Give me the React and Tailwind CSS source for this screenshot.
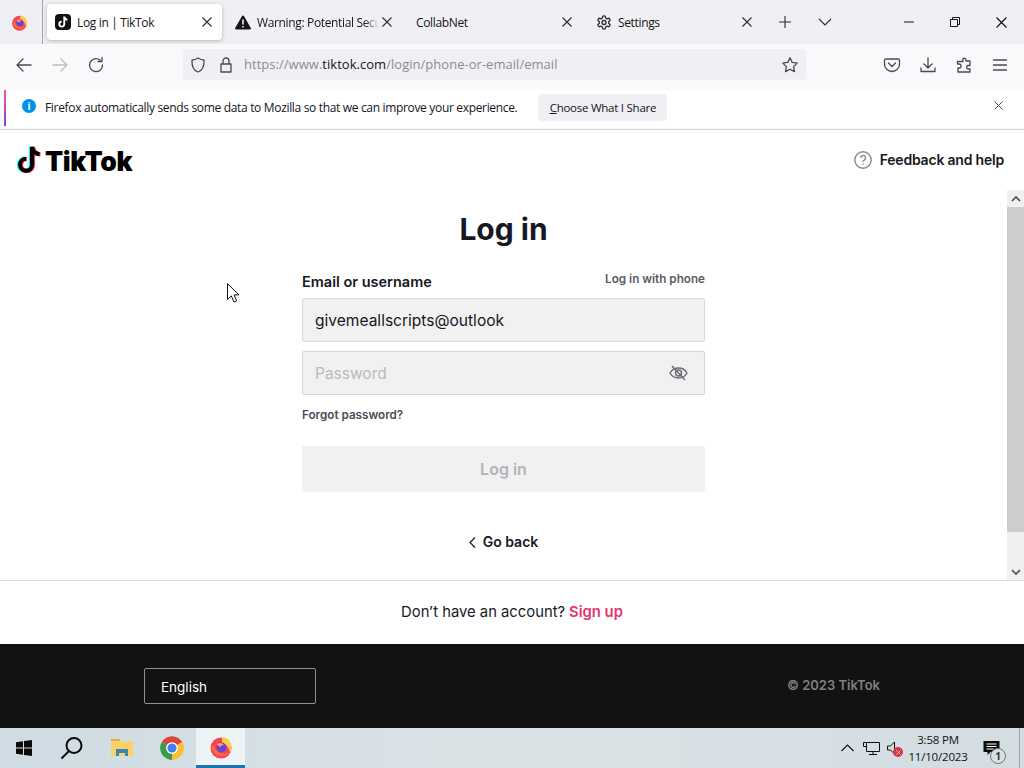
import React from "react";

const ui = "font-['Open_Sans',sans-serif]";
const web = "font-['Inter',sans-serif]";

const X = ({ s = 10, c = "#2b2a33" }) => (
  <svg width={s} height={s} viewBox="0 0 10 10" fill="none" stroke={c} strokeWidth="1.1"><path d="M.5.5l9 9M9.5.5l-9 9" /></svg>
);

const notePath = "M17 1v18a6 6 0 1 1-6-6M17 1c.4 4.200 3.400 7 7.500 7.500";

const Note = () => (
  <svg width="24" height="28" viewBox="2 0 24 28">
    <path d={notePath} fill="none" stroke="#25f4ee" strokeWidth="4.200" transform="translate(-1.100 .6)" />
    <path d={notePath} fill="none" stroke="#fe2c55" strokeWidth="4.200" transform="translate(1 1)" />
    <path d={notePath} fill="none" stroke="#000" strokeWidth="4" transform="translate(0 .8)" />
  </svg>
);

const Firefox = ({ s = 18 }) => (
  <svg width={s} height={s} viewBox="0 0 24 24">
    <circle cx="12" cy="13" r="10.500" fill="#f4435c" />
    <path d="M13 2c5.500.5 9.500 5 9.500 11 0 2-.6 3.500-1.500 5-1-6-4-9-8-10z" fill="#ffcb45" />
    <path d="M2 12c1 5 5 9 11 9 4 0 7-2 8.500-5-2 2-5 3-8 2.500C9 18 6 15 5 10z" fill="#ff6a39" />
    <circle cx="12.500" cy="12.500" r="5" fill="#6b3fd6" />
    <path d="M8 9c3-2 6-1 7 1-2-.4-3 .4-3 2-2-.5-3.500-1.500-4-3z" fill="#ffa436" />
  </svg>
);

const Chrome = () => (
  <svg width="26" height="26" viewBox="0 0 24 24">
    <path d="M12 12L2.500 6.500A11 11 0 0 1 21.500 6.500z" fill="#db4437" />
    <path d="M12 12l9.500-5.500A11 11 0 0 1 12 23z" fill="#fbc02d" />
    <path d="M12 12v11A11 11 0 0 1 2.500 6.500z" fill="#3a9b4a" />
    <circle cx="12" cy="12" r="5.400" fill="#fff" />
    <circle cx="12" cy="12" r="4.200" fill="#3f80ea" />
  </svg>
);

const Tab = ({ active, icon, title, fade, pad = "pl-2" }) => (
  <div className={`flex h-9 w-[175px] shrink-0 items-center pr-[10px] ${pad} ${active ? "rounded bg-white shadow-[0_1px_4px_rgba(0,0,0,0.25)]" : ""}`}>
    {icon && <span className="mr-[6px] flex w-4 shrink-0 justify-center">{icon}</span>}
    <span className={`min-w-0 flex-1 overflow-hidden whitespace-nowrap pt-px text-[12px] tracking-[-0.35px] text-[#15141a] ${fade ? "[mask-image:linear-gradient(to_right,black_88%,transparent_100%)]" : ""}`}>{title}</span>
    <span className="ml-[3px] shrink-0"><X /></span>
  </div>
);

const TabBar = () => (
  <div className={`flex h-11 shrink-0 items-center bg-[#f0f0f4] ${ui}`}>
    <div className="flex h-11 w-[43px] shrink-0 items-center justify-center border-r border-[#a5a5a8] pr-1"><Firefox s={17} /></div>
    <div className="ml-1 flex items-center gap-[5px]">
      <Tab active title="Log in | TikTok" icon={
        <span className="flex h-4 w-4 items-center justify-center rounded-[4px] bg-[#111]">
          <svg width="10" height="12" viewBox="2 0 24 28"><path d={notePath} fill="none" stroke="#fff" strokeWidth="4.500" /></svg>
        </span>} />
      <Tab fade title="Warning: Potential Security Risk Ahead" icon={
        <svg width="16" height="15" viewBox="0 0 16 15"><path d="M8 .5a1 1 0 0 1 .9.5l6.900 12a1 1 0 0 1-.9 1.500H1.100a1 1 0 0 1-.9-1.500L7.100 1A1 1 0 0 1 8 .5z" fill="#15141a" /><path d="M8 4.500v5M8 11v1.500" stroke="#fff" strokeWidth="1.500" /></svg>} />
      <Tab title="CollabNet" pad="pl-[9px]" />
      <Tab title="Settings" icon={
        <svg width="17" height="17" viewBox="0 0 24 24" fill="none" stroke="#2b2a33" strokeWidth="2"><path d="M12.220 2h-.44a2 2 0 0 0-2 2v.18a2 2 0 0 1-1 1.730l-.43.250a2 2 0 0 1-2 0l-.15-.08a2 2 0 0 0-2.730.730l-.22.380a2 2 0 0 0 .73 2.730l.15.100a2 2 0 0 1 1 1.720v.510a2 2 0 0 1-1 1.740l-.15.090a2 2 0 0 0-.73 2.730l.22.380a2 2 0 0 0 2.730.730l.15-.08a2 2 0 0 1 2 0l.43.250a2 2 0 0 1 1 1.730V20a2 2 0 0 0 2 2h.44a2 2 0 0 0 2-2v-.18a2 2 0 0 1 1-1.730l.43-.250a2 2 0 0 1 2 0l.15.080a2 2 0 0 0 2.730-.730l.22-.390a2 2 0 0 0-.73-2.730l-.15-.08a2 2 0 0 1-1-1.740v-.500a2 2 0 0 1 1-1.740l.15-.090a2 2 0 0 0 .73-2.730l-.22-.380a2 2 0 0 0-2.730-.730l-.15.080a2 2 0 0 1-2 0l-.43-.250a2 2 0 0 1-1-1.730V4a2 2 0 0 0-2-2z" /><circle cx="12" cy="12" r="3" /></svg>} pad="pl-[9px]" />
    </div>
    <div className="ml-4 flex w-[14px] justify-center">
      <svg width="12" height="12" viewBox="0 0 12 12" stroke="#2b2a33" strokeWidth="1.100"><path d="M6 0v12M0 6h12" /></svg>
    </div>
    <div className="ml-[26px] flex w-[14px] justify-center">
      <svg width="14" height="8" viewBox="0 0 14 8" fill="none" stroke="#2b2a33" strokeWidth="1.100"><path d="M1 1l6 6 6-6" /></svg>
    </div>
    <div className="ml-auto flex items-center pr-[17px]">
      <svg width="10" height="2" viewBox="0 0 10 2" stroke="#15141a"><path d="M0 1h10" /></svg>
      <svg className="ml-[36px]" width="10" height="10" viewBox="0 0 10 10" fill="none" stroke="#15141a"><path d="M.5 2.500h7v7h-7zM2.500 2.500v-2h7v7h-2" /></svg>
      <span className="ml-[36px]"><X s={11} c="#15141a" /></span>
    </div>
  </div>
);

const Ic = ({ children, w = 18 }) => (
  <svg width={w} height={w} viewBox="0 0 18 18" fill="none" stroke="#4a4950" strokeWidth="1.300" strokeLinecap="round" strokeLinejoin="round">{children}</svg>
);

const Toolbar = () => (
  <div className={`flex h-11 shrink-0 items-center bg-[#f9f9fb] pb-[3px] ${ui}`}>
    <div className="ml-[15px] flex w-[18px] justify-center"><Ic><path d="M16 9H2M8 3L2 9l6 6" /></Ic></div>
    <div className="ml-[18px] flex w-[18px] justify-center"><svg width="18" height="18" viewBox="0 0 18 18" fill="none" stroke="#bcbcc0" strokeWidth="1.300" strokeLinecap="round" strokeLinejoin="round"><path d="M2 9h14M10 3l6 6-6 6" /></svg></div>
    <div className="ml-[18px] flex w-[18px] justify-center"><Ic><path d="M15.500 9A6.500 6.500 0 1 1 13 4M15 1.500v4h-4" /></Ic></div>
    <div className="ml-[78px] flex h-[31px] w-[623px] items-center rounded bg-[#f0f0f4] pl-[6px] pr-[7px]">
      <Ic><path d="M9 2c2 1.400 4 2 6 2 .3 6-1.500 10.500-6 12C4.500 14.500 2.700 10 3 4c2 0 4-.6 6-2z" /></Ic>
      <span className="ml-[10px]"><Ic><path d="M4 8h10v8H4zM6 8V5a3 3 0 0 1 6 0v3" /></Ic></span>
      <span className="ml-[9px] whitespace-nowrap text-[13px] tracking-[0.03px] text-[#8d8c93]">https://www.<span className="text-[#15141a]">tiktok.com</span>/login/phone-or-email/email</span>
      <span className="ml-auto"><Ic><path d="M9 1.800l2.200 4.600 5 .7-3.600 3.500.9 5L9 13.200l-4.500 2.400.9-5L1.800 7.100l5-.7z" /></Ic></span>
    </div>
    <div className="ml-[77px] flex w-[18px] justify-center"><Ic><path d="M3 3h12a1.500 1.500 0 0 1 1.500 1.500V8a7.500 7.500 0 0 1-15 0V4.500A1.500 1.500 0 0 1 3 3zM5.500 7L9 10.500 12.500 7" /></Ic></div>
    <div className="ml-[18px] flex w-[18px] justify-center"><Ic><path d="M9 2v10M5 8l4 4 4-4M2 12v3.500h14V12" /></Ic></div>
    <div className="ml-[18px] flex w-[18px] justify-center"><Ic><path d="M8 2.500a2 2 0 0 1 3 1.500v1h4v4.500h-2a1.800 1.800 0 0 0 0 3.500h2v3H3v-4h1a2 2 0 0 0 0-4H2.500V5.500H8z" /></Ic></div>
    <div className="ml-[18px] flex w-[18px] justify-center"><Ic><path d="M2.500 4h13M2.500 9h13M2.500 14h13" /></Ic></div>
  </div>
);

const Notice = () => (
  <div className={`flex h-[42px] shrink-0 items-center border-b border-[#cfcfd8] bg-[#f9f9fb] pl-1 ${ui}`}>
    <div className="flex h-[38px] flex-1 items-center bg-white pb-[2px]">
      <div className="h-[36px] w-[2px] bg-gradient-to-b from-[#ff4f8b] to-[#7b3fd4]" />
      <div className="mb-[3px] ml-[16px] flex h-[14px] w-[14px] items-center justify-center rounded-full bg-[#0090ed] text-[10px] font-bold leading-none text-white">i</div>
      <span className="ml-[9px] whitespace-nowrap text-[12px] tracking-[-0.33px] text-[#15141a]">Firefox automatically sends some data to Mozilla so that we can improve your experience.</span>
      <button className={`ml-[21px] h-[27px] w-[129px] rounded bg-[#f0f0f4] text-[11.500px] tracking-[-0.25px] text-[#15141a] ${ui}`}><u>C</u>hoose What I Share</button>
      <span className="mb-[4px] ml-auto mr-[21px]"><X s={9} c="#4a4950" /></span>
    </div>
  </div>
);

const Header = () => (
  <div className={`flex h-[60px] shrink-0 items-center bg-white pl-[17px] pr-5 ${web}`}>
    <span className="mb-[2px]"><Note /></span>
    <span className="ml-[4px] mt-[3px] text-[26.500px] font-black leading-none tracking-[-0.35px] text-black">TikTok</span>
    <div className="ml-auto flex items-center">
      <svg width="18" height="18" viewBox="0 0 18 18" fill="none" stroke="#8a8a8a" strokeWidth="1.400"><circle cx="9" cy="9" r="8.200" /><path d="M6.700 7a2.400 2.400 0 1 1 3.500 2.100c-.8.500-1.200 1-1.200 2" /><path d="M9 12.600v1.200" /></svg>
      <span className="mb-[2px] ml-[8px] text-[14px] font-semibold tracking-[-0.2px] text-[#161823]">Feedback and help</span>
    </div>
  </div>
);

const Scrollbar = () => (
  <div className="flex w-[17px] shrink-0 flex-col bg-[#f0f0f0]">
    <div className="flex h-[17px] items-center justify-center">
      <svg width="10" height="6" viewBox="0 0 10 6" fill="none" stroke="#505050" strokeWidth="1.700"><path d="M1 5l4-4 4 4" /></svg>
    </div>
    <div className="h-[325px] bg-[#cdcdcd]" />
    <div className="flex flex-1 items-end justify-center pb-[5px]">
      <svg width="10" height="6" viewBox="0 0 10 6" fill="none" stroke="#505050" strokeWidth="1.700"><path d="M1 1l4 4 4-4" /></svg>
    </div>
  </div>
);

const Main = () => (
  <div className={`flex h-[390px] shrink-0 bg-white ${web}`}>
    <div className="relative flex flex-1 flex-col items-center">
      <svg className="absolute left-[227px] top-[93px]" width="13" height="20" viewBox="0 0 13 20" fill="#fff" stroke="#111" strokeWidth="1"><path d="M.5.700v15.800l3.800-3.600 2.700 6.200 2.700-1.200-2.700-6h5z" /></svg>
      <h1 className="mt-[20px] h-[39px] text-[30px] font-bold leading-[39px] text-[#161823]">Log in</h1>
      <div className="mt-[21px] w-[403px]">
        <div className="flex h-[28px] items-start justify-between">
          <span className="mt-[2px] text-[14.500px] font-semibold leading-[20px] text-[#161823]">Email or username</span>
          <span className="mt-px text-[11.700px] font-semibold leading-[16px] text-[#5a5b63]">Log in with phone</span>
        </div>
        <div className="flex h-[44px] items-center rounded-xs border border-[#d9d9db] bg-[#f1f1f2] pl-3 pt-[2px] text-[15.550px] text-[#161823]">givemeallscripts@outlook</div>
        <div className="mt-[9px] flex h-[44px] items-center justify-between rounded-xs border border-[#d4d4d6] bg-[#f1f1f2] pl-3 pr-4 text-[15.500px] text-[#b9b9be]">
          <span className="pt-[2px]">Password</span>
          <svg width="19" height="18" viewBox="0 0 19 18" fill="none" stroke="#6d6e75" strokeWidth="1.500"><path d="M1 9c2-3.500 5-5 8.500-5s6.500 1.500 8.500 5c-2 3.500-5 5-8.500 5S3 12.500 1 9z" /><circle cx="9.500" cy="9" r="3" /><path d="M3 2l13 14" /></svg>
        </div>
        <div className="mt-[11px] text-[11.700px] font-semibold leading-[18px] text-[#4b4c54]">Forgot password?</div>
        <div className="mt-[22px] flex h-[46px] items-center justify-center rounded-xs bg-[#f1f1f2] text-[16px] font-semibold text-[#b3b3b8]">Log in</div>
        <div className="mt-[40px] flex items-center justify-center text-[14px] font-semibold leading-[20px] text-[#161823]">
          <svg className="mr-[7px]" width="7" height="11" viewBox="0 0 7 11" fill="none" stroke="#161823" strokeWidth="1.200"><path d="M6 .5l-5 5 5 5" /></svg>
          Go back
        </div>
      </div>
    </div>
    <Scrollbar />
  </div>
);

const Signup = () => (
  <div className={`flex h-[64px] shrink-0 items-center justify-center border-t border-[#dcdcdc] bg-white text-[14.800px] ${web}`}>
    <span className="text-[#161823]">Don’t have an account?</span>
    <span className="ml-[4px] font-semibold text-[#e5356a]">Sign up</span>
  </div>
);

const Footer = () => (
  <div className={`flex h-[84px] shrink-0 items-center justify-between bg-[#121212] pl-[144px] pr-[144px] ${web}`}>
    <div className="flex h-9 w-[172px] items-center rounded-xs border border-[#8f8f8f] pl-4 pt-[2px] text-[13.500px] text-white">English</div>
    <span className="text-[13px] font-semibold text-[#808080]">© 2023 TikTok</span>
  </div>
);

const Taskbar = () => (
  <div className={`flex h-10 shrink-0 items-center bg-gradient-to-r from-[#cfdce3] via-[#dbe3e6] to-[#d3dde2] ${ui}`}>
    <div className="flex w-12 justify-center">
      <svg width="16" height="16" viewBox="0 0 16 16" fill="#0b0b0b"><path d="M0 2.300l7-1v6.300H0zM8 1.100L16 0v7.600H8zM0 8.500h7v6.300l-7-1zM8 8.500h8V16l-8-1.100z" /></svg>
    </div>
    <div className="flex w-12 justify-center">
      <svg width="24" height="24" viewBox="0 0 24 24" fill="none" stroke="#0b0b0b" strokeWidth="2"><circle cx="14" cy="9.500" r="7.500" /><path d="M9 15L1.500 22.500" /></svg>
    </div>
    <div className="flex w-[52px] justify-center">
      <svg width="22" height="20" viewBox="0 0 22 20"><path d="M0 1h8l2 2h-10z" fill="#e2a93b" /><path d="M0 3h22v15H0z" fill="#f9d368" /><path d="M5 11h12v7h-3v-3H8v3H5z" fill="#3b84b5" /></svg>
    </div>
    <div className="flex w-[48px] justify-center"><Chrome /></div>
    <div className="flex h-10 w-[49px] items-center justify-center border-b-[3px] border-[#1a73b8] bg-[#eef3f6]"><Firefox s={24} /></div>
    <div className="ml-auto flex items-center">
      <svg width="13" height="8" viewBox="0 0 13 8" fill="none" stroke="#111" strokeWidth="1.100"><path d="M.5 7l6-6 6 6" /></svg>
      <svg className="ml-[9px]" width="17" height="15" viewBox="0 0 17 15" fill="none" stroke="#111"><path d="M3.500 1.500h13v9h-13zM.5 1.500h3v4h-3zM10 10.500v3M6 13.500h8" /></svg>
      <span className="relative ml-[7px] flex w-[16px]">
        <svg width="10" height="14" viewBox="0 0 10 14" fill="none" stroke="#111"><path d="M.5 5h3l4-4v12l-4-4h-3z" /></svg>
        <span className="absolute left-[6px] top-[6px] flex h-[10px] w-[10px] items-center justify-center rounded-full bg-[#d9344a]"><X s={5} c="#fff" /></span>
      </span>
      <div className="ml-[1px] flex w-[68px] flex-col items-center text-[11.500px] leading-[17px] tracking-[-0.2px] text-[#111]">
        <span>3:58 PM</span>
        <span>11/10/2023</span>
      </div>
      <span className="relative ml-[11px] flex w-[36px]">
        <svg width="17" height="15" viewBox="0 0 16 15"><path d="M0 0h16v11H7l-3 3v-3H0z" fill="#0b0b0b" /><path d="M3 3h10M3 5.500h10M3 8h7" stroke="#fff" /></svg>
        <span className="absolute left-[7px] top-[7px] flex h-[16px] w-[16px] items-center justify-center rounded-full border-[1.500px] border-[#777] bg-[#d8e0e4] text-[10px] font-bold leading-none text-[#333]">1</span>
      </span>
      <div className="h-10 w-[5px] border-l border-[#9aa4aa]" />
    </div>
  </div>
);

export default function App() {
  return (
    <div className="flex h-[768px] w-[1024px] flex-col overflow-hidden bg-white">
      <TabBar />
      <Toolbar />
      <Notice />
      <Header />
      <Main />
      <Signup />
      <Footer />
      <Taskbar />
    </div>
  );
}
